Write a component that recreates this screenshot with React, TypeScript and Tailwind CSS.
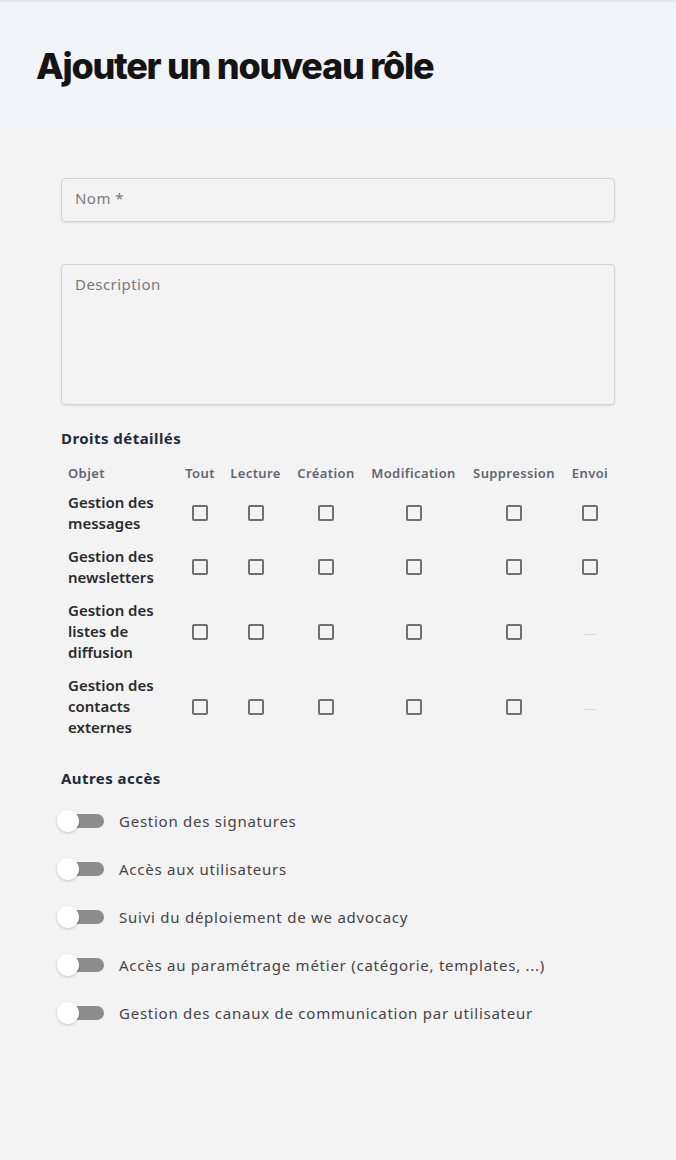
import { useState } from "react";

type RightKey = "tout" | "lecture" | "creation" | "modification" | "suppression" | "envoi";

const columns: { key: RightKey; label: string }[] = [
  { key: "tout", label: "Tout" },
  { key: "lecture", label: "Lecture" },
  { key: "creation", label: "Création" },
  { key: "modification", label: "Modification" },
  { key: "suppression", label: "Suppression" },
  { key: "envoi", label: "Envoi" },
];

const objects: { id: string; label: string; noEnvoi?: boolean }[] = [
  { id: "messages", label: "Gestion des messages" },
  { id: "newsletters", label: "Gestion des newsletters" },
  { id: "listes", label: "Gestion des listes de diffusion", noEnvoi: true },
  { id: "contacts", label: "Gestion des contacts externes", noEnvoi: true },
];

const otherAccess = [
  "Gestion des signatures",
  "Accès aux utilisateurs",
  "Suivi du déploiement de we advocacy",
  "Accès au paramétrage métier (catégorie, templates, ...)",
  "Gestion des canaux de communication par utilisateur",
];

function Checkbox() {
  const [checked, setChecked] = useState(false);
  return (
    <button
      type="button"
      onClick={() => setChecked(!checked)}
      className={`mx-auto block h-[16px] w-[16px] rounded-[2px] border-2 ${
        checked ? "border-[#1976d2] bg-[#1976d2]" : "border-[#707070] bg-transparent"
      }`}
    />
  );
}

function Toggle({ label }: { label: string }) {
  const [on, setOn] = useState(false);
  return (
    <div className="flex h-[48px] items-center">
      <button
        type="button"
        onClick={() => setOn(!on)}
        className="relative ml-[-4px] h-[36px] w-[58px] shrink-0"
      >
        <span className="absolute left-[13px] top-[11px] h-[14px] w-[34px] rounded-full bg-[#8c8c8c]" />
        <span
          className={`absolute top-[7px] h-[22px] w-[22px] rounded-full bg-white shadow-[0_1px_3px_rgba(0,0,0,0.2)] ${
            on ? "left-[25px]" : "left-0"
          }`}
        />
      </button>
      <span className="ml-[4px] text-[15px] tracking-[0.05em] text-[#444]">{label}</span>
    </div>
  );
}

export default function App() {
  return (
    <div className="min-h-[1160px] bg-[#f3f3f3] font-['Noto_Sans',sans-serif]">
      <header className="h-[127px] border-t-2 border-[#e6e8eb] bg-[#f0f3f7] pl-[36px] pt-[40px]">
        <h1 className="font-['Inter',sans-serif] text-[36px] font-extrabold leading-[48px] tracking-[-0.035em] text-[#141414]">
          Ajouter un nouveau rôle
        </h1>
      </header>

      <main className="px-[61px] pt-[51px]">
        <div className="flex h-[44px] items-center rounded-[4px] border border-[#d3d3d3] px-[13px] pb-[3px] shadow-[0_1px_2px_rgba(0,0,0,0.08)]">
          <span className="text-[15px] tracking-[0.03em] text-[#7a7a7a]">Nom *</span>
        </div>

        <div className="mt-[42px] h-[141px] rounded-[4px] border border-[#d3d3d3] px-[13px] pt-[7px] shadow-[0_1px_2px_rgba(0,0,0,0.08)]">
          <span className="text-[15px] tracking-[0.03em] text-[#7a7a7a]">Description</span>
        </div>

        <h2 className="mt-[23px] text-[15px] font-bold leading-[20px] tracking-[0.03em] text-[#222b3a]">
          Droits détaillés
        </h2>

        <table className="mt-[12px] w-[555px] table-fixed border-collapse">
          <colgroup>
            <col className="w-[117px]" />
            <col className="w-[44px]" />
            <col className="w-[67px]" />
            <col className="w-[74px]" />
            <col className="w-[101px]" />
            <col className="w-[100px]" />
            <col className="w-[52px]" />
          </colgroup>
          <thead>
            <tr>
              <th className="px-[7px] py-[6px] text-left text-[13px] font-semibold leading-[14px] tracking-[0.03em] text-[#5f6673]">
                Objet
              </th>
              {columns.map((c) => (
                <th
                  key={c.key}
                  className="px-0 py-[6px] text-center text-[13px] font-semibold leading-[14px] tracking-[0.03em] text-[#5f6673]"
                >
                  {c.label}
                </th>
              ))}
            </tr>
          </thead>
          <tbody>
            {objects.map((o) => (
              <tr key={o.id}>
                <td className="px-[7px] py-[6px] text-[15px] font-semibold leading-[21px] text-[#2b2b2b]">
                  {o.label}
                </td>
                {columns.map((c) => (
                  <td key={c.key} className="py-[6px] text-center">
                    {c.key === "envoi" && o.noEnvoi ? (
                      <span className="text-[12px] text-[#d6d6d6]">—</span>
                    ) : (
                      <Checkbox />
                    )}
                  </td>
                ))}
              </tr>
            ))}
          </tbody>
        </table>

        <h2 className="mt-[24px] text-[15px] font-bold leading-[20px] tracking-[0.03em] text-[#222b3a]">
          Autres accès
        </h2>

        <div className="mt-[9px] flex flex-col">
          {otherAccess.map((a) => (
            <Toggle key={a} label={a} />
          ))}
        </div>
      </main>
    </div>
  );
}
